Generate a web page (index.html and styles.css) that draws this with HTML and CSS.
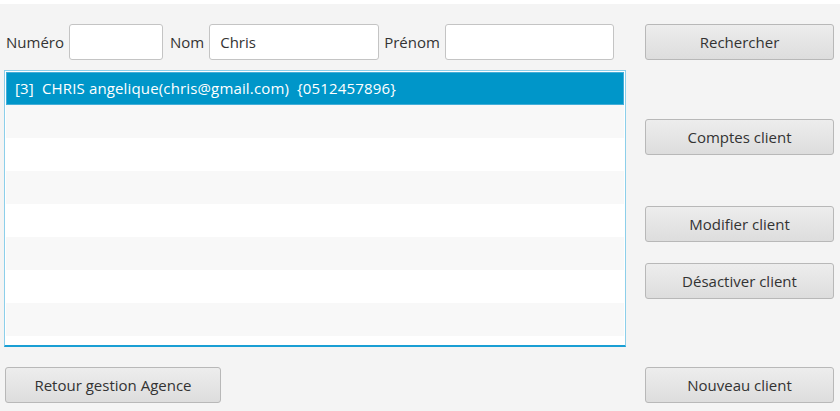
FILE: index.html
```html
<!DOCTYPE html>
<html lang="fr">
<head>
<meta charset="utf-8">
<title>Clients</title>
<link rel="stylesheet" href="styles.css">
</head>
<body>
<div class="window">
  <div class="main">
    <div class="search-row">
      <label class="lbl">Numéro</label>
      <input class="field f-num" type="text" value="">
      <label class="lbl">Nom</label>
      <input class="field f-nom" type="text" value="Chris">
      <label class="lbl">Prénom</label>
      <input class="field f-prenom" type="text" value="">
    </div>
    <div class="list">
      <div class="row selected">[3]&nbsp; CHRIS angelique(chris@gmail.com)&nbsp; {0512457896}</div>
      <div class="row odd"></div>
      <div class="row"></div>
      <div class="row odd"></div>
      <div class="row"></div>
      <div class="row odd"></div>
      <div class="row"></div>
      <div class="row odd"></div>
      <div class="row"></div>
    </div>
    <div class="bottom-left">
      <button class="btn btn-retour">Retour gestion Agence</button>
    </div>
  </div>
  <div class="side">
    <button class="btn b-rech">Rechercher</button>
    <button class="btn b-comptes">Comptes client</button>
    <button class="btn b-modif">Modifier client</button>
    <button class="btn b-desact">Désactiver client</button>
    <button class="btn b-nouveau">Nouveau client</button>
  </div>
</div>
</body>
</html>
```
FILE: styles.css
```css
html, body {
  margin: 0;
  padding: 0;
  height: 100%;
}
body {
  background: #f4f4f4;
  font-family: "Open Sans", "Noto Sans", sans-serif;
  font-size: 15px;
  color: #333;
  overflow: hidden;
}
.window {
  border-top: 4px solid #ffffff;
  display: flex;
  height: 407px;
}
.main {
  width: 640px;
  display: flex;
  flex-direction: column;
}
.search-row {
  display: flex;
  align-items: center;
  margin-top: 20px;
  height: 36px;
  padding-left: 6px;
}
.lbl {
  margin-right: 5px;
  color: #333;
}
.field {
  box-sizing: border-box;
  height: 36px;
  border: 1px solid #c4c4c4;
  border-radius: 3px;
  background: #fff;
  font: inherit;
  color: #333;
  padding: 0 10px;
  margin-right: 7px;
  outline: none;
}
.f-num { width: 94px; }
.f-nom { width: 170px; margin-right: 5px; }
.f-prenom { width: 169px; }
.list {
  box-sizing: border-box;
  margin-top: 10px;
  margin-left: 4px;
  width: 622px;
  height: 277px;
  background: #fff;
  border: 1px solid #8ccfea;
  border-bottom: 2px solid #1a9fd4;
  padding: 1px;
  overflow: hidden;
}
.row {
  height: 33px;
  box-sizing: border-box;
  background: #fff;
  line-height: 33px;
  padding-left: 9px;
  letter-spacing: 0.15px;
}
.row.odd { background: #f8f8f8; }
.row.selected {
  background: #0096c9;
  color: #fff;
  box-shadow: inset 0 0 0 1px #44aed8;
}
.bottom-left {
  margin-top: 20px;
  padding-left: 5px;
}
.btn {
  box-sizing: border-box;
  height: 36px;
  border: 1px solid #b8b8b8;
  border-radius: 3px;
  background: linear-gradient(#ededed, #dddddd);
  font: inherit;
  color: #333;
  padding: 0;
  cursor: default;
}
.btn-retour { width: 216px; }
.side {
  margin-left: 5px;
  display: flex;
  flex-direction: column;
  width: 189px;
}
.side .btn { width: 189px; }
.b-rech { margin-top: 20px; }
.b-comptes { margin-top: 59px; }
.b-modif { margin-top: 51px; }
.b-desact { margin-top: 21px; }
.b-nouveau { margin-top: 68px; }
```
